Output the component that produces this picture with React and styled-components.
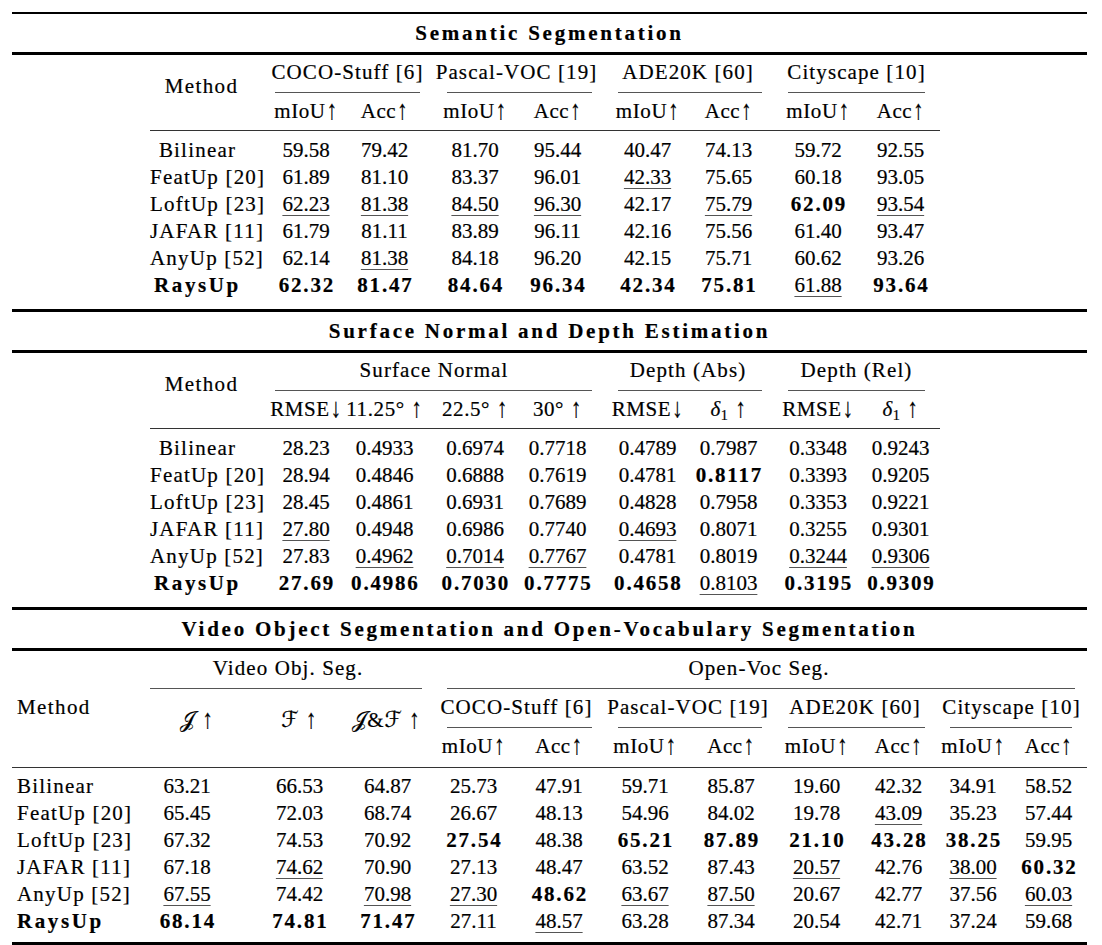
import React from "react";
import styled, { createGlobalStyle } from "styled-components";

const serif = `"Liberation Serif", "Times New Roman", "DejaVu Serif", serif`;

const GlobalStyle = createGlobalStyle`
  html, body {
    margin: 0;
    padding: 0;
    background: #fff;
  }
  body {
    font-family: ${serif};
    font-size: 21px;
    color: #000;
  }
`;

const Page = styled.main`
  width: 1075px;
  margin: 12px 0 0 12px;
  border-bottom: 3px solid #000;
  -webkit-text-stroke: 0.2px #000;
`;

const Section = styled.section`
  border-top: ${(p) => p.$rule}px solid #000;
`;

const Title = styled.h2`
  margin: 0;
  height: 38px;
  line-height: 38px;
  border-bottom: 3px solid #000;
  text-align: center;
  font-size: 21px;
  font-weight: bold;
  letter-spacing: 2.75px;
`;

const Table = styled.table`
  width: ${(p) => p.$width}px;
  margin-left: ${(p) => p.$offset}px;
  border-collapse: collapse;
  table-layout: fixed;
  font-size: 21px;
  line-height: 27px;

  thead {
    border-bottom: 1px solid #333;
  }
  tbody tr:first-child td {
    padding-top: ${(p) => p.$lead}px;
  }
  tbody tr:last-child td {
    padding-bottom: ${(p) => p.$tail}px;
  }
`;

const shift = (n = 0) =>
  `padding-left: ${Math.max(0, n * 2)}px; padding-right: ${Math.max(0, -n * 2)}px;`;

const HeadCell = styled.th`
  padding: 0;
  ${(p) => shift(p.$n)}
  font-weight: normal;
  white-space: nowrap;
  text-align: center;
  vertical-align: middle;
  letter-spacing: 1.1px;
`;

const MethodHead = styled(HeadCell)`
  text-align: ${(p) => (p.$left ? "left" : "center")};
  padding-left: ${(p) => (p.$left ? 5 : 0)}px;
  padding-bottom: ${(p) => p.$pb}px;
  letter-spacing: 1.4px;
`;

const GroupHead = styled(HeadCell)`
  padding-top: ${(p) => p.$pt ?? 4}px;
  padding-bottom: 5px;
  vertical-align: top;
`;

const CMid = styled.div`
  height: 1px;
  margin: 6px ${(p) => p.$mr}px 0 ${(p) => p.$ml}px;
  background: #555;
`;

const SubHead = styled(HeadCell)`
  padding-bottom: ${(p) => p.$pb ?? 5}px;
  letter-spacing: 0.6px;
`;

const MathHead = styled(HeadCell)`
  padding-bottom: ${(p) => p.$pb}px;
`;

const Script = styled.span`
  font-family: "DejaVu Serif", "DejaVu Sans", serif;
  font-size: 1.05em;
  letter-spacing: 0;
`;

const Arrow = styled.span`
  display: inline-block;
  margin-left: 1px;
  transform: scaleY(1.3);
  transform-origin: 50% 65%;
`;

const Var = styled.i`
  font-style: italic;
`;

const Sub = styled.sub`
  font-size: 0.68em;
  line-height: 0;
  vertical-align: -0.25em;
`;

const DataCell = styled.td`
  padding: 0;
  ${(p) => shift(p.$n)}
  text-align: center;
  white-space: nowrap;
`;

const NameCell = styled.td`
  padding: ${(p) => (p.$left ? "0 0 0 5px" : "0 8px 0 0")};
  text-align: ${(p) => (p.$left ? "left" : "center")};
  white-space: nowrap;
  font-weight: ${(p) => (p.$ours ? "bold" : "normal")};
  letter-spacing: ${(p) => (p.$ours ? "2.6px" : "1.2px")};
`;

const Best = styled.b`
  letter-spacing: 1.8px;
  margin-right: -1.8px;
`;

const Second = styled.span`
  text-decoration: underline;
  text-decoration-thickness: 1px;
  text-underline-offset: 4px;
  text-decoration-color: #555;
`;

const Value = ({ v }) => {
  if (v.startsWith("b:")) return <Best>{v.slice(2)}</Best>;
  if (v.startsWith("u:")) return <Second>{v.slice(2)}</Second>;
  return v;
};

const Up = () => <Arrow>↑</Arrow>;
const Down = () => <Arrow>↓</Arrow>;

const cols12 = [
  { w: 103, n: -1 },
  { w: 92, n: 7 },
  { w: 85, n: -3 },
  { w: 86, n: 2 },
  { w: 87, n: -2 },
  { w: 85, n: 2 },
  { w: 85, n: -2 },
  { w: 86, n: 2 },
  { w: 81, n: 1 },
];

const cols3 = [
  { w: 133, n: 0 },
  { w: 98, n: -7 },
  { w: 101, n: 6 },
  { w: 87, n: 0 },
  { w: 85, n: 0 },
  { w: 86, n: 0 },
  { w: 86, n: 0 },
  { w: 86, n: 0 },
  { w: 85, n: 0 },
  { w: 77, n: 1 },
  { w: 74, n: 0 },
  { w: 77, n: 0 },
];

const semRows = [
  { name: "Bilinear", vals: ["59.58", "79.42", "81.70", "95.44", "40.47", "74.13", "59.72", "92.55"] },
  { name: "FeatUp [20]", vals: ["61.89", "81.10", "83.37", "96.01", "u:42.33", "75.65", "60.18", "93.05"] },
  { name: "LoftUp [23]", vals: ["u:62.23", "u:81.38", "u:84.50", "u:96.30", "42.17", "u:75.79", "b:62.09", "u:93.54"] },
  { name: "JAFAR [11]", vals: ["61.79", "81.11", "83.89", "96.11", "42.16", "75.56", "61.40", "93.47"] },
  { name: "AnyUp [52]", vals: ["62.14", "u:81.38", "84.18", "96.20", "42.15", "75.71", "60.62", "93.26"] },
  { name: "RaysUp", ours: true, vals: ["b:62.32", "b:81.47", "b:84.64", "b:96.34", "b:42.34", "b:75.81", "u:61.88", "b:93.64"] },
];

const depthRows = [
  { name: "Bilinear", vals: ["28.23", "0.4933", "0.6974", "0.7718", "0.4789", "0.7987", "0.3348", "0.9243"] },
  { name: "FeatUp [20]", vals: ["28.94", "0.4846", "0.6888", "0.7619", "0.4781", "b:0.8117", "0.3393", "0.9205"] },
  { name: "LoftUp [23]", vals: ["28.45", "0.4861", "0.6931", "0.7689", "0.4828", "0.7958", "0.3353", "0.9221"] },
  { name: "JAFAR [11]", vals: ["u:27.80", "0.4948", "0.6986", "0.7740", "u:0.4693", "0.8071", "0.3255", "0.9301"] },
  { name: "AnyUp [52]", vals: ["27.83", "u:0.4962", "u:0.7014", "u:0.7767", "0.4781", "0.8019", "u:0.3244", "u:0.9306"] },
  { name: "RaysUp", ours: true, vals: ["b:27.69", "b:0.4986", "b:0.7030", "b:0.7775", "b:0.4658", "u:0.8103", "b:0.3195", "b:0.9309"] },
];

const videoRows = [
  { name: "Bilinear", vals: ["63.21", "66.53", "64.87", "25.73", "47.91", "59.71", "85.87", "19.60", "42.32", "34.91", "58.52"] },
  { name: "FeatUp [20]", vals: ["65.45", "72.03", "68.74", "26.67", "48.13", "54.96", "84.02", "19.78", "u:43.09", "35.23", "57.44"] },
  { name: "LoftUp [23]", vals: ["67.32", "74.53", "70.92", "b:27.54", "48.38", "b:65.21", "b:87.89", "b:21.10", "b:43.28", "b:38.25", "59.95"] },
  { name: "JAFAR [11]", vals: ["67.18", "u:74.62", "70.90", "27.13", "48.47", "63.52", "87.43", "u:20.57", "42.76", "u:38.00", "b:60.32"] },
  { name: "AnyUp [52]", vals: ["u:67.55", "74.42", "u:70.98", "u:27.30", "b:48.62", "u:63.67", "u:87.50", "20.67", "42.77", "37.56", "u:60.03"] },
  { name: "RaysUp", ours: true, vals: ["b:68.14", "b:74.81", "b:71.47", "27.11", "u:48.57", "63.28", "87.34", "20.54", "42.71", "37.24", "59.68"] },
];

const Cols = ({ cols }) => (
  <colgroup>
    {cols.map((c, i) => (
      <col key={i} style={{ width: c.w }} />
    ))}
  </colgroup>
);

const Body = ({ rows, cols, left }) => (
  <tbody>
    {rows.map((r) => (
      <tr key={r.name}>
        <NameCell $left={left} $ours={r.ours}>
          {r.name}
        </NameCell>
        {r.vals.map((v, j) => (
          <DataCell key={j} $n={cols[j + 1].n}>
            <Value v={v} />
          </DataCell>
        ))}
      </tr>
    ))}
  </tbody>
);

const MetricRow = ({ cols, first, pb }) =>
  [0, 1, 2, 3].flatMap((g) => [
    <SubHead key={`${g}-m`} $n={cols[first + g * 2].n} $pb={pb}>
      mIoU<Up />
    </SubHead>,
    <SubHead key={`${g}-a`} $n={cols[first + g * 2 + 1].n} $pb={pb}>
      Acc<Up />
    </SubHead>,
  ]);

const SemanticTable = () => (
  <Section $rule={2}>
    <Title>Semantic Segmentation</Title>
    <Table $width={790} $offset={138} $lead={6} $tail={10}>
      <Cols cols={cols12} />
      <thead>
        <tr>
          <MethodHead rowSpan={2} $pb={13}>
            Method
          </MethodHead>
          <GroupHead colSpan={2} $n={6}>
            COCO-Stuff [6]
            <CMid $ml={10} $mr={10} />
          </GroupHead>
          <GroupHead colSpan={2}>
            Pascal-VOC [19]
            <CMid $ml={17} $mr={11} />
          </GroupHead>
          <GroupHead colSpan={2}>
            ADE20K [60]
            <CMid $ml={15} $mr={11} />
          </GroupHead>
          <GroupHead colSpan={2}>
            Cityscape [10]
            <CMid $ml={15} $mr={15} />
          </GroupHead>
        </tr>
        <tr>
          <MetricRow cols={cols12} first={1} />
        </tr>
      </thead>
      <Body rows={semRows} cols={cols12} />
    </Table>
  </Section>
);

const Delta = () => (
  <>
    <Var>δ</Var>
    <Sub>1</Sub> <Up />
  </>
);

const DepthTable = () => (
  <Section $rule={3}>
    <Title>Surface Normal and Depth Estimation</Title>
    <Table $width={790} $offset={138} $lead={6} $tail={10}>
      <Cols cols={cols12} />
      <thead>
        <tr>
          <MethodHead rowSpan={2} $pb={13}>
            Method
          </MethodHead>
          <GroupHead colSpan={4} $n={6}>
            Surface Normal
            <CMid $ml={10} $mr={11} />
          </GroupHead>
          <GroupHead colSpan={2}>
            Depth (Abs)
            <CMid $ml={15} $mr={11} />
          </GroupHead>
          <GroupHead colSpan={2}>
            Depth (Rel)
            <CMid $ml={15} $mr={15} />
          </GroupHead>
        </tr>
        <tr>
          <SubHead $n={cols12[1].n}>
            RMSE<Down />
          </SubHead>
          <SubHead $n={cols12[2].n}>
            11.25° <Up />
          </SubHead>
          <SubHead $n={cols12[3].n}>
            22.5° <Up />
          </SubHead>
          <SubHead $n={cols12[4].n}>
            30° <Up />
          </SubHead>
          <SubHead $n={cols12[5].n}>
            RMSE<Down />
          </SubHead>
          <SubHead $n={cols12[6].n}>
            <Delta />
          </SubHead>
          <SubHead $n={cols12[7].n}>
            RMSE<Down />
          </SubHead>
          <SubHead $n={cols12[8].n}>
            <Delta />
          </SubHead>
        </tr>
      </thead>
      <Body rows={depthRows} cols={cols12} />
    </Table>
  </Section>
);

const datasets = [
  { label: "COCO-Stuff [6]", ml: 16, mr: 10 },
  { label: "Pascal-VOC [19]", ml: 16, mr: 12 },
  { label: "ADE20K [60]", ml: 14, mr: 11 },
  { label: "Cityscape [10]", ml: 14, mr: 15 },
];

const VideoTable = () => (
  <Section $rule={3}>
    <Title>Video Object Segmentation and Open-Vocabulary Segmentation</Title>
    <Table $width={1075} $offset={0} $lead={5} $tail={7}>
      <Cols cols={cols3} />
      <thead>
        <tr>
          <MethodHead rowSpan={3} $left $pb={4}>
            Method
          </MethodHead>
          <GroupHead colSpan={3}>
            Video Obj. Seg.
            <CMid $ml={5} $mr={9} />
          </GroupHead>
          <GroupHead colSpan={8}>
            Open-Voc Seg.
            <CMid $ml={16} $mr={12} />
          </GroupHead>
        </tr>
        <tr>
          <MathHead rowSpan={2} $n={3} $pb={22}>
            <Script>𝒥</Script> <Up />
          </MathHead>
          <MathHead rowSpan={2} $n={6} $pb={22}>
            <Script>ℱ</Script> <Up />
          </MathHead>
          <MathHead rowSpan={2} $n={-1} $pb={22}>
            <Script>𝒥</Script>&amp;<Script>ℱ</Script> <Up />
          </MathHead>
          {datasets.map((d) => (
            <GroupHead key={d.label} colSpan={2} $pt={0}>
              {d.label}
              <CMid $ml={d.ml} $mr={d.mr} />
            </GroupHead>
          ))}
        </tr>
        <tr>
          <MetricRow cols={cols3} first={4} pb={7} />
        </tr>
      </thead>
      <Body rows={videoRows} cols={cols3} left />
    </Table>
  </Section>
);

export default function App() {
  return (
    <>
      <GlobalStyle />
      <Page>
        <SemanticTable />
        <DepthTable />
        <VideoTable />
      </Page>
    </>
  );
}
